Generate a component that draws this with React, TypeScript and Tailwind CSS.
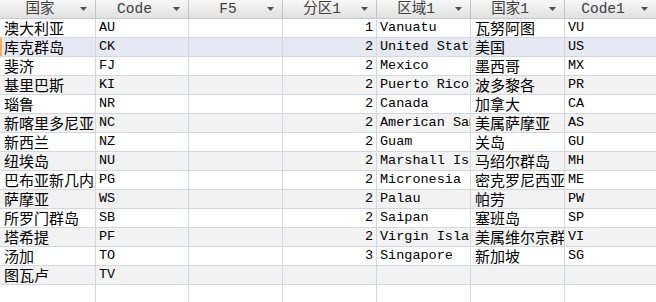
import React from "react";

const widths = ["w-[96px]", "w-[93px]", "w-[94px]", "w-[94px]", "w-[94px]", "w-[94px]", "w-[91px]"];
const headers = ["国家", "Code", "F5", "分区1", "区域1", "国家1", "Code1"];

type Row = [string, string, string, string, string, string, string];
const rows: Row[] = [
  ["澳大利亚", "AU", "", "1", "Vanuatu", "瓦努阿图", "VU"],
  ["库克群岛", "CK", "", "2", "United States", "美国", "US"],
  ["斐济", "FJ", "", "2", "Mexico", "墨西哥", "MX"],
  ["基里巴斯", "KI", "", "2", "Puerto Rico", "波多黎各", "PR"],
  ["瑙鲁", "NR", "", "2", "Canada", "加拿大", "CA"],
  ["新喀里多尼亚", "NC", "", "2", "American Samoa", "美属萨摩亚", "AS"],
  ["新西兰", "NZ", "", "2", "Guam", "关岛", "GU"],
  ["纽埃岛", "NU", "", "2", "Marshall Islands", "马绍尔群岛", "MH"],
  ["巴布亚新几内亚", "PG", "", "2", "Micronesia", "密克罗尼西亚", "ME"],
  ["萨摩亚", "WS", "", "2", "Palau", "帕劳", "PW"],
  ["所罗门群岛", "SB", "", "2", "Saipan", "塞班岛", "SP"],
  ["塔希提", "PF", "", "2", "Virgin Islands", "美属维尔京群岛", "VI"],
  ["汤加", "TO", "", "3", "Singapore", "新加坡", "SG"],
  ["图瓦卢", "TV", "", "", "", "", ""],
  ["", "", "", "", "", "", ""],
];

const cjk = "font-['Noto_Sans_CJK_SC',sans-serif] text-[15px]";
const mono = "font-['Liberation_Mono','Noto_Sans_CJK_SC',monospace] text-[13.5px]";

function Arrow() {
  return (
    <svg width="7" height="4" viewBox="0 0 7 4" className="block">
      <path d="M0 0 H7 L3.5 4 Z" fill="#505050" />
    </svg>
  );
}

export default function App() {
  return (
    <div className="w-[656px] h-[302px] overflow-hidden bg-white relative">
      <div className="flex h-[19px] border-b border-[#c6c9ce] bg-gradient-to-b from-[#f7f7f7] to-[#e1e1e1]">
        {headers.map((h, i) => (
          <div
            key={i}
            className={`${widths[i]} shrink-0 h-full flex items-center border-r border-[#c3c3c3] ${i === 6 ? "border-r-0" : ""}`}
          >
            <div className="flex-1 text-center text-[#404040] font-['Liberation_Mono','Noto_Sans_CJK_SC',monospace] text-[14.5px] leading-[18px] whitespace-nowrap overflow-hidden">
              {h}
            </div>
            <div className="w-[15px] shrink-0 flex justify-start">
              <Arrow />
            </div>
          </div>
        ))}
      </div>
      {rows.map((r, ri) => {
        const selected = ri === 1;
        const bg = selected ? "bg-[#e6e9f1]" : ri % 2 === 1 ? "bg-[#f2f2f2]" : "bg-white";
        return (
          <div key={ri} className={`flex h-[19px] border-b border-[#d3d7de] ${bg}`}>
            {r.map((c, ci) => {
              const isCjk = ci === 0 || ci === 5;
              const right = ci === 3;
              return (
                <div
                  key={ci}
                  className={`${widths[ci]} shrink-0 h-full border-r border-[#d3d7de] overflow-hidden whitespace-nowrap text-black flex items-center ${
                    right ? "justify-end pr-[3px]" : isCjk ? "pl-[4px]" : "pl-[3px]"
                  } ${isCjk ? cjk : mono} leading-[18px] ${ci === 6 ? "border-r-0" : ""}`}
                >
                  {c}
                </div>
              );
            })}
          </div>
        );
      })}
      <div className="absolute left-0 top-[38px] w-[2px] h-[18px] bg-[#f6ad5c]" />
    </div>
  );
}
